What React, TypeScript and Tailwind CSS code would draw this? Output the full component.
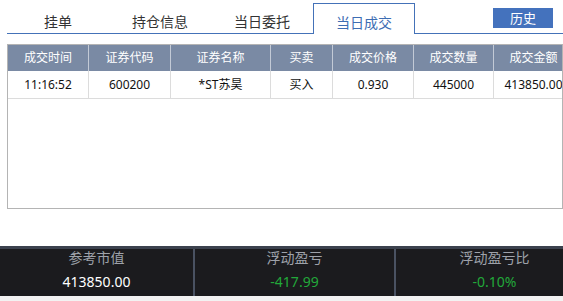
import React from "react";

const tabs = ["挂单", "持仓信息", "当日委托", "当日成交"];
const activeTab = 3;

const headers = ["成交时间", "证券代码", "证券名称", "买卖", "成交价格", "成交数量", "成交金额"];
const rows = [["11:16:52", "600200", "*ST苏昊", "买入", "0.930", "445000", "413850.00"]];

const summary = [
  { label: "参考市值", value: "413850.00", tone: "text-white", width: "w-[195px]" },
  { label: "浮动盈亏", value: "-417.99", tone: "text-[#22a83a]", width: "w-[201px]" },
  { label: "浮动盈亏比", value: "-0.10%", tone: "text-[#22a83a]", width: "w-[197px]" },
];

export default function App() {
  return (
    <div className="w-[563px] h-[301px] overflow-hidden bg-white flex flex-col font-['Noto_Sans','Noto_Sans_CJK_SC',sans-serif]">
      {/* tab strip */}
      <div className="ml-[7px] h-[34px] flex items-end border-b border-[#4472b8] shrink-0">
        {tabs.map((t, i) =>
          i === activeTab ? (
            <div
              key={t}
              className="w-[102px] h-[31px] -mb-px flex items-center justify-center pt-[6px] bg-white border border-b-0 border-[#4472b8] text-[14px] text-[#3d6db3]"
            >
              {t}
            </div>
          ) : (
            <div key={t} className="w-[102px] h-[31px] flex items-center justify-center pt-[7px] text-[14px] text-[#333]">
              {t}
            </div>
          )
        )}
        <button className="self-start mt-[8px] ml-auto mr-[10px] w-[60px] h-[20px] bg-[#4472bd] text-white text-[13px] leading-[20px]">
          历史
        </button>
      </div>

      {/* deals table */}
      <div className="mt-[10px] ml-[7px] w-[556px] h-[165px] border border-[#b4b4b4] overflow-hidden shrink-0">
        <div className="grid grid-cols-[81px_82px_100px_62px_81px_80px_80px] w-max">
          {headers.map((h) => (
            <div
              key={h}
              className="h-[26px] flex items-center justify-center bg-[#7a8aa4] text-white text-[12px] border-r border-[#c3cad6]"
            >
              {h}
            </div>
          ))}
          {rows.map((r) =>
            r.map((c, j) => (
              <div
                key={j}
                className="h-[28px] flex items-center justify-center text-[12px] text-[#111] border-r border-b border-[#dcdcdc] whitespace-nowrap"
              >
                {c}
              </div>
            ))
          )}
        </div>
      </div>

      {/* summary bar */}
      <div className="mt-[37px] h-[50px] bg-[#1b1b1e] border-t-[3px] border-[#3c424e] flex overflow-hidden shrink-0">
        {summary.map((s, i) => (
          <div
            key={s.label}
            className={`${s.width} shrink-0 flex flex-col items-center ${i < 2 ? "border-r-2 border-[#4a5262]" : ""}`}
          >
            <div className="text-[14px] leading-[18px] text-[#9ea2aa]">{s.label}</div>
            <div className={`mt-[6px] text-[14px] leading-[18px] ${s.tone}`}>{s.value}</div>
          </div>
        ))}
      </div>
      <div className="flex-1 bg-[#f2f2f2]" />
    </div>
  );
}
